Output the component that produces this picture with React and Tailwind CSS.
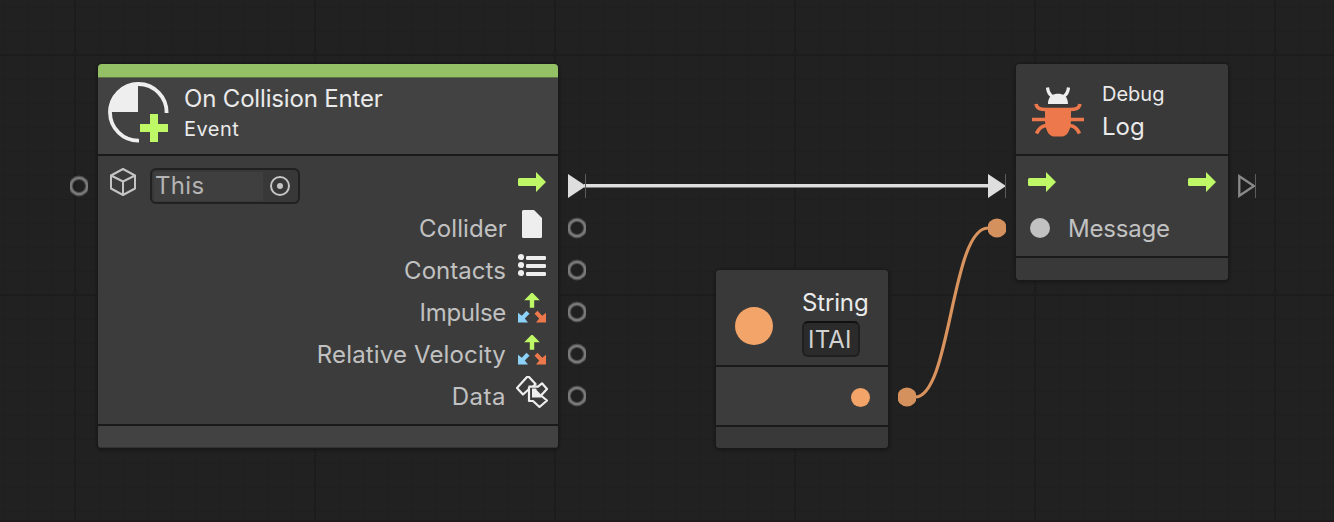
const grid = {
  vertical: [75, 315, 555, 795, 1035, 1275],
  horizontal: [55, 295],
};

function Grid() {
  const minorX = Array.from({ length: 56 }, (_, i) => 3 + i * 24);
  const minorY = Array.from({ length: 22 }, (_, i) => 7 + i * 24);
  return (
    <svg className="absolute inset-0" width="1334" height="522" shapeRendering="crispEdges">
      {minorX.map((x) => <rect key={x} x={x} y="0" width="1" height="522" fill="#1f1f1f" />)}
      {minorY.map((y) => <rect key={y} x="0" y={y} width="1334" height="1" fill="#1f1f1f" />)}
      {grid.vertical.map((x) => <rect key={x} x={x - 1} y="0" width="2" height="522" fill="#1c1c1c" />)}
      {grid.horizontal.map((y) => <rect key={y} x="0" y={y - 1} width="1334" height="2" fill="#1c1c1c" />)}
      <rect x="0" y="520" width="1334" height="2" fill="#1f191c" />
    </svg>
  );
}

function Arrow() {
  return (
    <svg width="28" height="20" viewBox="0 0 28 20" className="shrink-0">
      <path d="M1.5 6H18V0L28 10 18 20V14H1.5Q0 14 0 12.5V7.5Q0 6 1.5 6Z" fill="#bff867" />
    </svg>
  );
}

function EventIcon() {
  return (
    <svg width="62" height="62" viewBox="0 0 62 62" className="shrink-0">
      <path d="M58.6 31A28.3 28.3 0 1 0 31 58.6" fill="none" stroke="#eee" strokeWidth="3.8" />
      <path d="M30 30V0.500A29.500 29.500 0 0 0 0.500 30Z" fill="#eee" />
      <path d="M42 32h8v10h10v8H50v10h-8V50H32v-8h10Z" fill="#bff867" />
    </svg>
  );
}

function Cube() {
  return (
    <svg width="26" height="28" viewBox="0 0 26 28" className="shrink-0" fill="none" stroke="#c4c4c4" strokeWidth="2" strokeLinejoin="round">
      <path d="M13 1 25 7.5V20.5L13 27 1 20.5V7.5ZM1 7.5 13 13.5 25 7.5M13 13.5V27" />
    </svg>
  );
}

function FileIcon() {
  return (
    <svg width="28" height="28" viewBox="0 0 28 28">
      <path d="M5.5 0H16L24 8V26.5Q24 28 22.5 28H5.5Q4 28 4 26.5V1.5Q4 0 5.5 0Z" fill="#eee" />
    </svg>
  );
}

function ListIcon() {
  return (
    <svg width="28" height="28" viewBox="0 0 28 28" fill="#eee">
      {[5, 13, 21].map((y) => (
        <g key={y}>
          <circle cx="3" cy={y} r="3.1" />
          <rect x="8" y={y - 1} width="20" height="4" rx="1.3" />
        </g>
      ))}
    </svg>
  );
}

function VectorIcon() {
  return (
    <svg width="28" height="30" viewBox="0 0.7 28 30">
      <path d="M14 0 21.8 8H16.2V15.500H11.8V8H6.2Z" fill="#bff867" />
      <path d="M8.500 18.500 11.500 21.500 6.800 26.200 10 30.200H0V20.500L3.800 23.500Z" fill="#8cd2f8" />
      <path d="M19.500 18.500 16.500 21.500 21.200 26.200 18 30.200H28V20.500L24.200 23.500Z" fill="#ed784b" />
    </svg>
  );
}

function DataIcon() {
  return (
    <svg width="32" height="32" viewBox="0 0 32 32" className="shrink-0" fill="none" stroke="#eee" strokeWidth="2.2" strokeLinejoin="round">
      <path d="M12.500 13.500 7 18.500 1 12 11 1H13L19.500 8 17 10.700" />
      <path d="M12.500 10.700H22L26 7.300 31 13 25 19.500 31 24.500 23.500 31 17 25H13V10.700" />
      <path d="M16 12.500H20L25.500 18V21.500H16Z" fill="#eee" stroke="none" />
      <path d="M20 13.500H22L25 17V18.500Z" fill="#3c3c3c" stroke="none" />
    </svg>
  );
}

function BugIcon() {
  return (
    <svg width="52" height="50" viewBox="0 0 52 50" className="shrink-0">
      <path d="M15.500 0.500C16 6 18 8 20.500 9.500M36.500 0.500C36 6 34 8 31.500 9.500" fill="none" stroke="#eee" strokeWidth="3.200" />
      <path d="M16 17C16 12 18 9.500 20 8.500C22 6 30 6 32 8.500C34 9.500 36 12 36 17Z" fill="#eee" />
      <path d="M4 17C5 22 9 22.500 14 22.500H38C43 22.500 47 22 48 17M0 32.500H52M4.500 46.500C7 41 10 38.500 15 38.500M47.500 46.500C45 41 42 38.500 37 38.500" fill="none" stroke="#ed784b" strokeWidth="3.600" />
      <path d="M13 21H39V33C39 43 35 49.500 30 49.500H22C17 49.500 13 43 13 33Z" fill="#ed784b" />
    </svg>
  );
}

function Ring() {
  return (
    <svg width="18" height="22" viewBox="0 0 18 22">
      <circle cx="9" cy="11" r="8.200" fill="none" stroke="#4a4a4a" strokeWidth="4.400" />
      <circle cx="9" cy="11" r="8.200" fill="none" stroke="#7a7a7a" strokeWidth="2.200" />
    </svg>
  );
}

function FlowPort({ filled }) {
  return (
    <svg width="18" height="24" viewBox="0 0 18 24">
      {filled
        ? <path d="M0 0 18 12 0 24Z" fill="#dedede" />
        : <path d="M1.300 2.200 16 12 1.300 21.800Z" fill="none" stroke="#8a8a8a" strokeWidth="2.300" />}
      <path d="M17.500 0V24" stroke="#5c5c5c" strokeWidth="1" />
    </svg>
  );
}

function ValuePort() {
  return (
    <svg width="18" height="20" viewBox="0 0 18 20">
      <circle cx="9" cy="10" r="9.600" fill="#d4905d" />
    </svg>
  );
}

const outputs = [
  { label: 'Collider', icon: <FileIcon />, tracking: 'tracking-[0.1px] -mr-px' },
  { label: 'Contacts', icon: <ListIcon />, tracking: 'tracking-[0.05px]' },
  { label: 'Impulse', icon: <VectorIcon />, tracking: 'tracking-[-0.35px]' },
  { label: 'Relative Velocity', icon: <VectorIcon />, tracking: 'tracking-[0.15px]' },
  { label: 'Data', icon: <DataIcon />, tracking: 'tracking-[0.5px]' },
];

const nodeStyle = 'absolute flex flex-col overflow-hidden rounded-[4px] bg-[#3c3c3c] shadow-[0_0_0_1px_#1a1a1a,0_1px_3px_1px_#151515]';

function CollisionNode() {
  return (
    <section className={`${nodeStyle} left-[98px] top-[64px] h-[384px] w-[460px]`}>
      <div className="h-[14px] shrink-0 border-b border-[#5d7343] bg-[#94c165]" />
      <header className="flex h-[76px] shrink-0 bg-[#424242] pl-[10px] pt-[4px]">
        <EventIcon />
        <div className="ml-[14px] flex flex-col text-[#eaeaea]">
          <span className="mt-[2px] text-[24px] leading-[30px] tracking-[-0.17px]">On Collision Enter</span>
          <span className="mt-[2px] text-[20px] leading-[26px] tracking-[0.5px]">Event</span>
        </div>
      </header>
      <div className="h-[272px] shrink-0 border-y-2 border-[#1a1a1a]">
        <div className="flex h-[52px] items-start pl-[12px] pr-[12px] pt-[12px]">
          <Cube />
          <div className="ml-[14px] flex h-[36px] w-[150px] items-center rounded-[6px] border-2 border-[#212121] bg-[#383838] pl-[2px] pr-[8px]">
            <span className="flex h-[29px] w-[109px] items-center bg-[#3f3f3f] pl-px text-[24px] tracking-[0.3px] text-[#b4b4b4]">This</span>
            <svg width="20" height="20" viewBox="0 0 20 20" className="ml-auto">
              <circle cx="10" cy="10" r="9" fill="none" stroke="#c4c4c4" strokeWidth="2" />
              <circle cx="10" cy="10" r="3" fill="#c4c4c4" />
            </svg>
          </div>
          <div className="ml-auto mt-[4px]"><Arrow /></div>
        </div>
        {outputs.map((o) => (
          <div key={o.label} className="flex h-[42px] items-center justify-end pr-[12px] text-[24px] text-[#c1c1c1]">
            <span className={o.tracking}>{o.label}</span>
            <span className="mb-[10px] ml-[12px] flex w-[28px] justify-center">{o.icon}</span>
          </div>
        ))}
      </div>
      <footer className="flex-1 border-b border-[#333] bg-[#424242]" />
    </section>
  );
}

function StringNode() {
  return (
    <section className={`${nodeStyle} left-[716px] top-[270px] h-[178px] w-[172px]`}>
      <header className="flex h-[95px] shrink-0 bg-[#393939] pl-[19px]">
        <span className="mt-[37px] size-[38px] shrink-0 rounded-full bg-[#f2a469]" />
        <div className="ml-[29px] mt-[18px] flex flex-col items-start">
          <span className="text-[24px] leading-[30px] tracking-[-0.15px] text-[#eaeaea]">String</span>
          <span className="mt-[3px] flex h-[36px] w-[58px] items-center rounded-[6px] border-2 border-[#1f1f1f] border-t-[#101010] bg-[#2b2b2b] pl-[4px] pt-[2px] text-[24px] tracking-[0.2px] text-[#d2d2d2]">ITAI</span>
        </div>
      </header>
      <div className="flex h-[62px] shrink-0 items-center justify-end border-y-2 border-[#1a1a1a] pr-[18px] pt-[2px]">
        <span className="size-[19px] rounded-full bg-[#f2a469]" />
      </div>
      <footer className="flex-1 bg-[#393939]" />
    </section>
  );
}

function DebugNode() {
  return (
    <section className={`${nodeStyle} left-[1016px] top-[64px] h-[216px] w-[212px]`}>
      <header className="flex h-[90px] shrink-0 bg-[#393939] pl-[16px] pt-[17px]">
        <div className="mt-[6px]"><BugIcon /></div>
        <div className="ml-[18px] flex flex-col text-[#eaeaea]">
          <span className="text-[20px] leading-[26px] tracking-[0px]">Debug</span>
          <span className="mt-[5px] text-[24px] leading-[30px] tracking-[0px]">Log</span>
        </div>
      </header>
      <div className="h-[104px] shrink-0 border-y-2 border-[#1a1a1a]">
        <div className="flex h-[52px] items-center justify-between px-[12px]"><Arrow /><Arrow /></div>
        <div className="flex h-[42px] items-center pl-[14px]">
          <span className="mb-[3px] size-[20px] rounded-full bg-[#c1c1c1]" />
          <span className="ml-[18px] text-[24px] tracking-[-0.2px] text-[#c1c1c1]">Message</span>
        </div>
      </div>
      <footer className="flex-1 bg-[#393939]" />
    </section>
  );
}

export default function App() {
  return (
    <main className="relative h-[522px] w-[1334px] overflow-hidden bg-[#212121] font-['Inter',sans-serif]">
      <Grid />
      <svg className="absolute inset-0" width="1334" height="522" fill="none">
        <path d="M584 185.700H990" stroke="#dedede" strokeWidth="3.600" />
        <path d="M915 397C951 397 951 228 988 228" stroke="#d9935e" strokeWidth="3.200" />
      </svg>
      <CollisionNode />
      <StringNode />
      <DebugNode />
      <div className="absolute left-[70px] top-[175px]"><Ring /></div>
      <div className="absolute left-[568px] top-[174px] flex flex-col">
        <FlowPort filled />
        <div className="mt-[19px] flex flex-col gap-[20px]">
          {outputs.map((o) => <Ring key={o.label} />)}
        </div>
      </div>
      <div className="absolute left-[988px] top-[174px] flex flex-col gap-[20px]">
        <FlowPort filled />
        <ValuePort />
      </div>
      <div className="absolute left-[1238px] top-[174px]"><FlowPort /></div>
      <div className="absolute left-[898px] top-[387px]"><ValuePort /></div>
    </main>
  );
}
